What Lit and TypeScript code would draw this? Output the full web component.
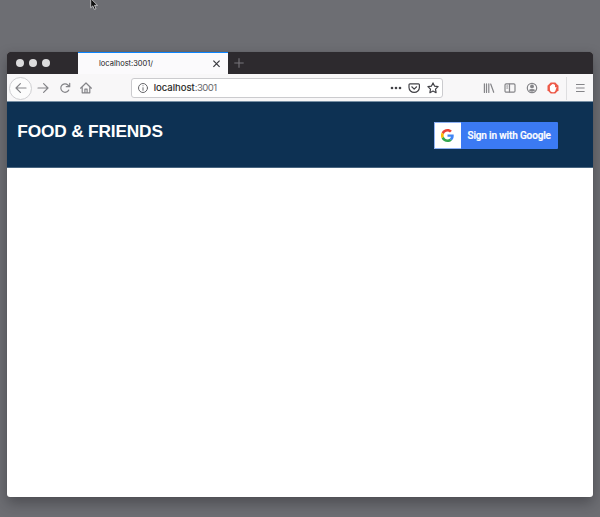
import { LitElement, html, css, svg } from "lit";
import { customElement } from "lit/decorators.js";

const icon = (cls: string, body: unknown) =>
  html`<svg class="icon ${cls}" viewBox="0 0 16 16" width="16" height="16">${body}</svg>`;

@customElement("browser-tabs")
class BrowserTabs extends LitElement {
  static styles = css`
    :host { display: flex; height: 22px; background: #2d2a2e; }
    .lights { display: flex; gap: 5.4px; padding: 7.3px 0 0 8.5px; width: 62.5px; }
    .light { width: 8px; height: 8px; border-radius: 50%; background: #dcdcdd; }
    .tab {
      box-sizing: border-box; width: 150px; border-top: 1px solid #0a84ff; background: #fbfafc;
      display: flex; align-items: center; justify-content: space-between; padding: 1px 7px 0 21px;
      font: 7.5px/20px Inter, "Liberation Sans", sans-serif; color: #202023;
    }
    .close { stroke: #38383d; stroke-width: 1.2; fill: none; }
    .plus { margin: 6px 0 0 6px; stroke: #77757a; stroke-width: 1.1; fill: none; }
  `;
  render() {
    return html`
      <div class="lights"><i class="light"></i><i class="light"></i><i class="light"></i></div>
      <div class="tab"><span>localhost:3001/</span>
        <svg class="close" width="9" height="9" viewBox="0 0 9 9"><path d="M1.4 .7l6.2 6.2M7.6 .7L1.4 6.9" /></svg>
      </div>
      <svg class="plus" width="10" height="10" viewBox="0 0 10 10"><path d="M5 .3v9.4M.3 5h9.4" /></svg>
    `;
  }
}

@customElement("browser-toolbar")
class BrowserToolbar extends LitElement {
  static styles = css`
    :host {
      display: flex; align-items: center; height: 27px; box-sizing: border-box;
      background: #f8f7f8; padding-top: 1px;
    }
    .icon { fill: none; stroke: #858589; stroke-width: 1.2; stroke-linecap: round; stroke-linejoin: round; flex: none; display: block; }
    .back {
      box-sizing: border-box; width: 23px; height: 23px; border: 1px solid #cfcfd2; border-radius: 50%;
      display: flex; align-items: center; justify-content: center; margin-left: 2px; background: #fcfcfc;
    }
    .forward { margin-left: 2.5px; }
    .reload { margin-left: 6px; }
    .home { margin-left: 5px; }
    .url {
      box-sizing: border-box; width: 312px; height: 20px; margin-left: 37px; border: 1px solid #cbcbce;
      border-radius: 3px; background: #fff; display: flex; align-items: center; padding: 0 1px 0 3px;
      font: 9.6px/18px Inter, "Liberation Sans", sans-serif; color: #6a6a6d;
    }
    .host { color: #1c1c20; -webkit-text-stroke: 0.15px #1c1c20; }
    .port { letter-spacing: -0.55px; }
    .address { margin-left: 3.2px; flex: 1; }
    .url .icon { stroke: #424247; }
    .url .info { stroke: #68686c; stroke-width: 1; }
    .pocket { margin: 0 3px; }
    .url .dots { fill: #424247; stroke: none; }
    .library { margin-left: 38px; }
    .sidebar, .account, .blocker { margin-left: 5.5px; }
    .blocker { stroke: none; }
    .solid { fill: #858589; stroke: none; }
    .red { fill: #ed5948; }
    .hand { fill: #fff; }
    .rule { width: 1px; height: 23px; background: #dedee0; margin-left: 5px; }
    .menu { margin-left: 5px; stroke-linecap: butt; }
    .url .pocket, .url .star { position: relative; left: 0.7px; }
  `;
  render() {
    return html`
      <div class="back">${icon("", svg`<path d="M13 8H3M7.4 3.6L3 8l4.4 4.4" />`)}</div>
      ${icon("forward", svg`<path d="M3 8h10M8.6 3.6L13 8l-4.4 4.4" />`)}
      ${icon("reload", svg`<path d="M11.7 10.1A4.2 4.2 0 1 1 10.9 5L12 6M12.7 3.3V6.7H9.3" />`)}
      ${icon("home", svg`<path d="M2.6 8.2L8 3l5.4 5.2M4.2 7.3v5.5h7.6V7.3M6.9 12.6V9.2h2.2v3.4" />`)}
      <div class="url">
        ${icon("info", svg`<circle cx="8" cy="8" r="4.5" /><path d="M8 7.7v2.6M8 5.7v.1" />`)}
        <span class="address"><span class="host">localhost</span><span class="port">:3001</span></span>
        ${icon("dots", svg`<circle cx="5" cy="8" r="1.3" /><circle cx="9" cy="8" r="1.3" /><circle cx="13" cy="8" r="1.3" />`)}
        ${icon("pocket", svg`<path d="M4 3.8h8.4q1 0 1 1v2.8a5.2 4.8 0 0 1-10.4 0V4.8q0-1 1-1zM5.8 6.8L8.2 9.1l2.4-2.3" />`)}
        ${icon("star", svg`<path d="M8 2.9l1.5 3.2 3.6.5-2.6 2.5.6 3.6L8 11l-3.1 1.7.6-3.6-2.6-2.5 3.6-.5z" />`)}
      </div>
      ${icon("library", svg`<path d="M3.4 3.8v8.6M5.5 3.8v8.6M7.8 3.8v8.6M9.7 4l3 8.3" />`)}
      ${icon("sidebar", svg`<rect x="3" y="3.8" width="10" height="8.4" rx="1.2" /><path d="M7.5 4v8M4.8 6h.9M4.8 8h.9" />`)}
      ${icon("account", svg`<circle cx="8" cy="8" r="4.7" /><circle class="solid" cx="8" cy="6.4" r="1.9" /><path class="solid" d="M4.8 10.3q.6-1.4 3.2-1.4t3.2 1.4Q10 11.7 8 11.7t-3.2-1.4z" />`)}
      ${icon("blocker", svg`<path class="red" d="M5.7 2.5h4.6l3.2 3.2v4.6l-3.2 3.2H5.7l-3.2-3.2V5.7z" /><path class="hand" d="M4.9 9.2V6.1q.4-.7.9 0V5q.5-.7 1 0l.1-.8q.6-.6 1 0 .8-.5 1.100.3.7-.3 1 .4v2.6l.9-.6q.9 0 .6.7L10.3 11q-.6 1.2-2.2 1.2-3.2 0-3.2-3z" />`)}
      <i class="rule"></i>
      ${icon("menu", svg`<path d="M4 4.5h8.6M4 8h8.6M4 11.5h8.6" />`)}
    `;
  }
}

@customElement("site-header")
class SiteHeader extends LitElement {
  static styles = css`
    :host {
      box-sizing: border-box; height: 67px; background: #0d3153; display: flex;
      border-top: 1px solid #7890a5; border-bottom: 1px solid #486580;
      justify-content: space-between; align-items: flex-start; padding: 0 35px 0 10.3px;
    }
    h1 { margin: 19px 0 0; font: bold 17.3px/20px "Liberation Sans", sans-serif; letter-spacing: -0.17px; color: #fff; white-space: nowrap; }
    .google {
      display: flex; box-sizing: border-box; width: 124px; height: 27px; margin: 20px 0 0; padding: 0;
      border: 0; border-radius: 1px; overflow: hidden; background: #3b7af3; color: #fff;
      font: 500 10px/27px Roboto, sans-serif; letter-spacing: -0.14px; -webkit-text-stroke: 0.2px #fff; white-space: nowrap;
    }
    .mark {
      box-sizing: border-box; width: 26.5px; height: 27px; background: #fff; border: solid #8fb2f5; border-width: 1px 0 1px 1px;
      display: grid; place-items: center; margin-right: 7px;
    }
  `;
  render() {
    return html`
      <h1>FOOD &amp; FRIENDS</h1>
      <button class="google">
        <span class="mark">
          <svg width="13" height="13" viewBox="0 0 48 48">
            <path fill="#EA4335" d="M24 9.5c3.5 0 6.7 1.2 9.2 3.6l6.9-6.9C35.9 2.4 30.5 0 24 0 14.6 0 6.5 5.4 2.6 13.2l8 6.2C12.4 13.7 17.7 9.5 24 9.5z" />
            <path fill="#4285F4" d="M47 24.6c0-1.6-.2-3.1-.4-4.6H24v9h12.9c-.6 3-2.3 5.500-4.800 7.200l7.700 6C44.400 38 47 32 47 24.600z" />
            <path fill="#FBBC05" d="M10.5 28.6a14.5 14.5 0 0 1 0-9.2l-8-6.2a24 24 0 0 0 0 21.6z" />
            <path fill="#34A853" d="M24 48c6.5 0 11.9-2.1 15.9-5.8l-7.7-6c-2.2 1.5-4.9 2.3-8.2 2.3-6.3 0-11.6-4.2-13.5-9.9l-8 6.2C6.5 42.6 14.6 48 24 48z" />
          </svg>
        </span>
        <span>Sign in with Google</span>
      </button>
    `;
  }
}

@customElement("app-root")
class AppRoot extends LitElement {
  static styles = css`
    :host {
      display: block; box-sizing: border-box; height: 517px; padding: 52px 7px 20px 7px;
      background: #6d6e73; position: relative; overflow: hidden;
    }
    .window {
      height: 445px; border-radius: 3px; background: #fff; overflow: hidden;
      box-shadow: 0 0 1px #505156, 0 6px 14px rgba(30, 30, 36, 0.42);
    }
    .cursor { position: absolute; left: 90px; top: -2px; }
  `;
  render() {
    return html`
      <div class="window">
        <browser-tabs></browser-tabs>
        <browser-toolbar></browser-toolbar>
        <site-header></site-header>
      </div>
      <svg class="cursor" width="9" height="13" viewBox="0 0 9 13">
        <path d="M.7.5v9.3l2.1-1.9 1.5 3.5 1.7-.7-1.5-3.4h3z" fill="#111" stroke="#d8d8da" stroke-width=".8" />
      </svg>
    `;
  }
}
